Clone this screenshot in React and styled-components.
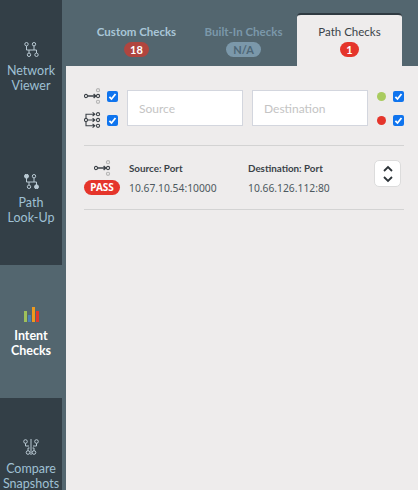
import React from "react";
import styled, { createGlobalStyle } from "styled-components";

const GlobalStyle = createGlobalStyle`
  html, body {
    margin: 0;
    padding: 0;
    height: 490px;
    overflow: hidden;
    background: #eeecec;
    font-family: Lato, "Noto Sans", sans-serif;
  }
`;

function NetworkIcon() {
  return (
    <svg width="15" height="15" viewBox="0 0 15 15" fill="none" stroke="currentColor" strokeWidth="1">
      <circle cx="2.5" cy="2.2" r="1.7" />
      <circle cx="10" cy="2.2" r="1.7" />
      <circle cx="5" cy="12.8" r="1.7" />
      <circle cx="12.5" cy="12.8" r="1.7" />
      <path d="M2.5 4v4h7.5V4M5 11V8M12.5 11V8h-2.5" />
    </svg>
  );
}

function PathIcon() {
  return (
    <svg width="15" height="15" viewBox="0 0 15 15" fill="none" stroke="currentColor" strokeWidth="1">
      <circle cx="2.5" cy="2.2" r="2" fill="currentColor" />
      <circle cx="10" cy="2.2" r="1.7" />
      <circle cx="5" cy="12.8" r="1.7" />
      <circle cx="12.5" cy="12.8" r="2" fill="currentColor" />
      <path d="M2.5 4v4h10v3M5 11V8M10 4v4" />
    </svg>
  );
}

function BarsIcon() {
  return (
    <svg width="15" height="15" viewBox="0 0 15 15">
      <rect x="0" y="4" width="3" height="11" fill="#9fc05a" />
      <rect x="4" y="8" width="3" height="7" fill="#4a7fb5" />
      <rect x="8" y="0" width="3" height="15" fill="#ef9a1d" />
      <rect x="12" y="4" width="3" height="11" fill="#e0392d" />
    </svg>
  );
}

function CompareIcon() {
  return (
    <svg width="16" height="16" viewBox="0 0 16 16" fill="none" stroke="currentColor" strokeWidth="1">
      <circle cx="2.5" cy="2.5" r="1.8" />
      <circle cx="13.5" cy="2.5" r="1.8" />
      <circle cx="5" cy="13.5" r="1.8" />
      <circle cx="11" cy="13.5" r="1.8" />
      <path d="M8 0v16M2.5 4.3V7H6M13.5 4.3V7H10M5 11.7V9H6.5M11 11.7V9H9.5" />
    </svg>
  );
}

function SingleFlowIcon() {
  return (
    <svg width="23" height="16" viewBox="0 0 23 16" fill="none" stroke="#3c4248" strokeWidth="1.1">
      <circle cx="2" cy="8" r="1.6" />
      <path d="M3.6 8h8M9.6 6l2.2 2-2.2 2" strokeWidth="1.3" />
      <circle cx="14" cy="8" r="1.6" />
      <circle cx="14" cy="2.2" r="1.6" stroke="#b5b5b5" />
      <circle cx="14" cy="13.8" r="1.6" stroke="#b5b5b5" />
    </svg>
  );
}

function MultiFlowIcon() {
  return (
    <svg width="23" height="16" viewBox="0 0 23 16" fill="none" stroke="#3c4248" strokeWidth="1.1">
      <circle cx="2" cy="8" r="1.6" />
      <path d="M2 6.4V2.2h8.5M8.6 0.4l2.2 1.8-2.2 1.8M3.6 8h7M8.6 6.2 10.8 8l-2.2 1.8M2 9.6v4.2h8.5M8.6 12l2.2 1.8-2.2 1.8" />
      <circle cx="14" cy="2.2" r="1.6" />
      <circle cx="14" cy="8" r="1.6" />
      <circle cx="14" cy="13.8" r="1.6" />
    </svg>
  );
}

function CheckBox() {
  return (
    <CheckSquare>
      <svg width="11" height="11" viewBox="0 0 11 11" fill="none" stroke="#fff" strokeWidth="1.8">
        <path d="M2.4 5.8 4.5 8l4-5" />
      </svg>
    </CheckSquare>
  );
}

const navItems = [
  { label: ["Network", "Viewer"], icon: <NetworkIcon /> },
  { label: ["Path", "Look-Up"], icon: <PathIcon /> },
  { label: ["Intent", "Checks"], icon: <BarsIcon />, active: true },
  { label: ["Compare", "Snapshots"], icon: <CompareIcon /> },
];

const tabs = [
  { label: "Custom Checks", badge: "18", tone: "muted" },
  { label: "Built-In Checks", badge: "N/A", tone: "disabled" },
  { label: "Path Checks", badge: "1", tone: "red", active: true },
];

export default function App() {
  return (
    <Page>
      <GlobalStyle />
      <Sidebar>
        {navItems.map((item) => (
          <NavItem key={item.label[0]} $active={item.active}>
            {item.icon}
            <NavLabel $active={item.active}>
              {item.label[0]}
              <br />
              {item.label[1]}
            </NavLabel>
          </NavItem>
        ))}
      </Sidebar>
      <Main>
        <TabBar>
          {tabs.map((tab) => (
            <Tab key={tab.label} $active={tab.active} $tone={tab.tone}>
              <span>{tab.label}</span>
              <Badge $tone={tab.tone}>{tab.badge}</Badge>
            </Tab>
          ))}
        </TabBar>
        <Content>
          <FilterRow>
            <FlowToggles>
              <ToggleRow>
                <SingleFlowIcon />
                <CheckBox />
              </ToggleRow>
              <ToggleRow>
                <MultiFlowIcon />
                <CheckBox />
              </ToggleRow>
            </FlowToggles>
            <SearchInput placeholder="Source" />
            <SearchInput placeholder="Destination" />
            <StatusToggles>
              <ToggleRow>
                <Dot $color="#a9cb5f" />
                <CheckBox />
              </ToggleRow>
              <ToggleRow>
                <Dot $color="#e5352b" />
                <CheckBox />
              </ToggleRow>
            </StatusToggles>
          </FilterRow>
          <ResultRow>
            <ResultStatus>
              <FlowIconSlot>
                <SingleFlowIcon />
              </FlowIconSlot>
              <PassBadge>PASS</PassBadge>
            </ResultStatus>
            <Endpoint $width="119px">
              <EndpointTitle>Source: Port</EndpointTitle>
              <EndpointValue>10.67.10.54:10000</EndpointValue>
            </Endpoint>
            <Endpoint $width="127px">
              <EndpointTitle>Destination: Port</EndpointTitle>
              <EndpointValue>10.66.126.112:80</EndpointValue>
            </Endpoint>
            <ExpandButton>
              <svg width="12" height="18" viewBox="0 0 12 18" fill="none" stroke="#2c3338" strokeWidth="1.8">
                <path d="M2 6 6 2l4 4M2 12l4 4 4-4" />
              </svg>
            </ExpandButton>
          </ResultRow>
        </Content>
      </Main>
    </Page>
  );
}

const Page = styled.div`
  display: flex;
  width: 418px;
  height: 490px;
  overflow: hidden;
`;
const Sidebar = styled.nav`
  width: 66px;
  flex-shrink: 0;
  display: flex;
  flex-direction: column;
  background: #333f47;
`;
const NavItem = styled.div`
  height: 132.5px;
  flex-shrink: 0;
  box-sizing: border-box;
  padding-top: 41.5px;
  display: flex;
  flex-direction: column;
  align-items: center;
  gap: 6px;
  color: ${(p) => (p.$active ? "#fff" : "#b9c9d3")};
  background: ${(p) => (p.$active ? "#53666f" : "#333f47")};
  border-right: 4px solid #53666f;
`;
const NavLabel = styled.div`
  width: 66px;
  text-align: center;
  font-size: 12.5px;
  line-height: 15px;
  color: ${(p) => (p.$active ? "#fff" : "#9fc0d4")};
  font-weight: ${(p) => (p.$active ? 700 : 400)};
`;
const Main = styled.div`
  flex: 1;
  display: flex;
  flex-direction: column;
  min-width: 0;
`;
const TabBar = styled.div`
  height: 66px;
  flex-shrink: 0;
  box-sizing: border-box;
  padding: 13px 16px 0 0;
  display: flex;
  justify-content: flex-end;
  background: #53666f;
`;
const Tab = styled.div`
  width: ${(p) => (p.$active ? "105px" : "107px")};
  display: flex;
  flex-direction: column;
  align-items: center;
  padding-top: 9px;
  box-sizing: border-box;
  font-size: 11.5px;
  line-height: 16px;
  font-weight: ${(p) => (p.$active ? 400 : 700)};
  color: ${(p) =>
    p.$active ? "#3a4248" : p.$tone === "disabled" ? "#7b98aa" : "#a9c6d8"};
  background: ${(p) => (p.$active ? "#eeecec" : "transparent")};
  border-top: 2px solid ${(p) => (p.$active ? "#2f3a41" : "transparent")};
  border-radius: 4px 4px 0 0;
`;
const badgeColors = { muted: "#b0453f", disabled: "#7b98aa", red: "#e5352b" };
const Badge = styled.span`
  margin-top: 2px;
  padding: 0 ${(p) => (p.$tone === "disabled" ? "7px" : "6.5px")};
  height: 15px;
  line-height: 15px;
  border-radius: 8px;
  font-size: 11px;
  font-weight: 700;
  color: ${(p) => (p.$tone === "disabled" ? "#4d6676" : "#fff")};
  background: ${(p) => badgeColors[p.$tone]};
`;
const Content = styled.div`
  flex: 1;
  padding: 24px 14px 0 18px;
  background: #eeecec;
`;
const FilterRow = styled.div`
  display: flex;
  align-items: center;
  height: 36px;
  padding-bottom: 19px;
  border-bottom: 1px solid #d3d3d3;
`;
const FlowToggles = styled.div`
  display: flex;
  flex-direction: column;
  gap: 8px;
  margin-right: 9px;
`;
const StatusToggles = styled(FlowToggles)`
  margin-right: 0;
  margin-left: 9px;
`;
const ToggleRow = styled.div`
  display: flex;
  align-items: center;
  height: 16px;
  svg {
    flex-shrink: 0;
  }
`;
const CheckSquare = styled.span`
  width: 11px;
  height: 11px;
  border-radius: 2px;
  background: #0f74ee;
  display: flex;
  align-items: center;
  justify-content: center;
`;
const SearchInput = styled.input`
  width: 116px;
  height: 36px;
  box-sizing: border-box;
  margin-right: 9px;
  padding: 0 11px;
  border: 1px solid #d3d6de;
  background: #fff;
  font-family: inherit;
  font-size: 12px;
  outline: none;
  &:last-of-type {
    margin-right: 0;
  }
  &::placeholder {
    color: #c4c4c4;
  }
`;
const Dot = styled.span`
  width: 9px;
  height: 9px;
  margin-right: 7px;
  border-radius: 50%;
  background: ${(p) => p.$color};
`;
const ResultRow = styled.div`
  display: flex;
  height: 64px;
  box-sizing: border-box;
  padding-top: 14px;
  width: 320px;
  border-bottom: 1px solid #d3d3d3;
`;
const ResultStatus = styled.div`
  width: 45px;
  flex-shrink: 0;
  display: flex;
  flex-direction: column;
  align-items: flex-start;
  gap: 4px;
`;
const FlowIconSlot = styled.div`
  height: 16px;
  padding-left: 10px;
`;
const PassBadge = styled.span`
  width: 36px;
  height: 15px;
  border-radius: 8px;
  background: #e5352b;
  color: #fff;
  font-family: "Noto Sans", sans-serif;
  font-size: 10px;
  font-weight: 700;
  line-height: 15px;
  text-align: center;
`;
const Endpoint = styled.div`
  width: ${(p) => p.$width};
  flex-shrink: 0;
  padding-top: 1px;
`;
const EndpointTitle = styled.div`
  font-size: 9.8px;
  line-height: 14px;
  font-weight: 700;
  color: #3a4248;
`;
const EndpointValue = styled.div`
  margin-top: 6px;
  font-family: "Noto Sans", sans-serif;
  font-size: 10.3px;
  line-height: 14px;
  color: #4d5960;
`;
const ExpandButton = styled.div`
  width: 27px;
  height: 27px;
  flex-shrink: 0;
  margin-left: -1px;
  box-sizing: border-box;
  background: #fff;
  border: 1px solid #dcdcdc;
  border-radius: 5px;
  display: flex;
  align-items: center;
  justify-content: center;
`;
